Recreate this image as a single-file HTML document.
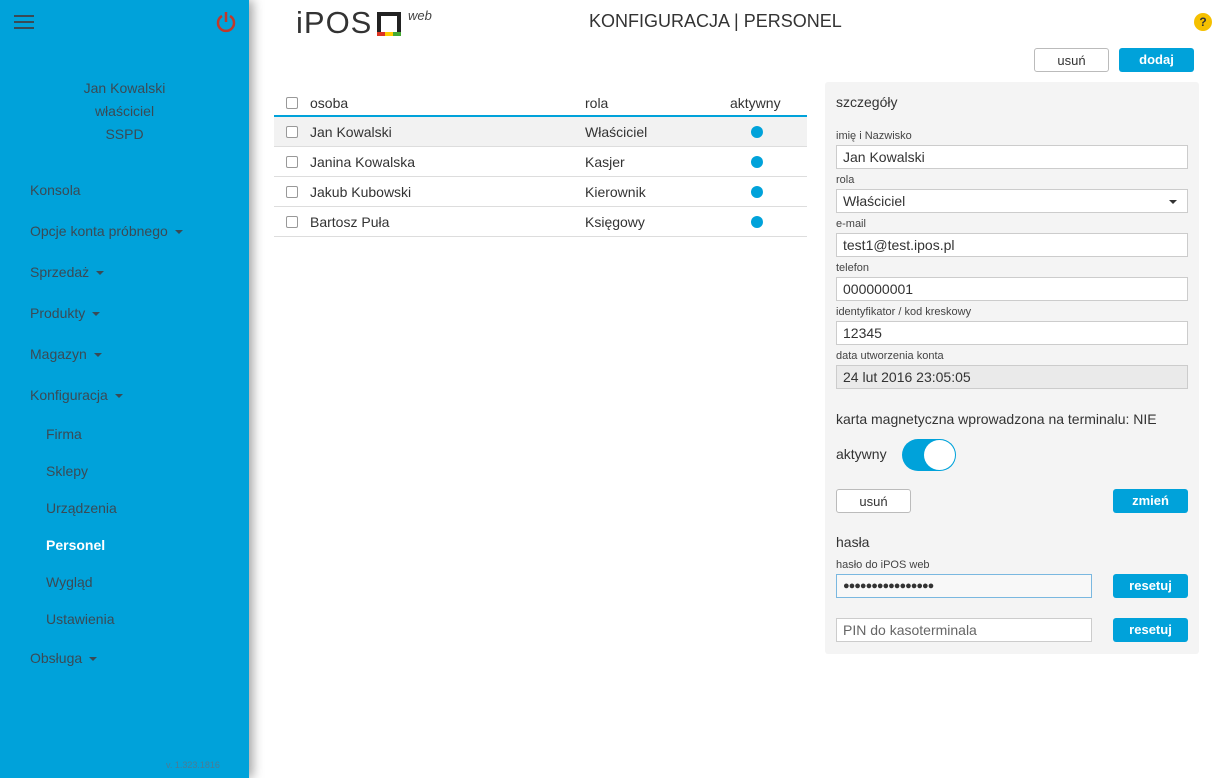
<!DOCTYPE html>
<html><head><meta charset="utf-8"><style>
*{box-sizing:border-box;margin:0;padding:0}
body{width:1223px;height:778px;position:relative;overflow:hidden;background:#fff;font-family:"Liberation Sans",sans-serif;color:#333;font-size:14px}
.a{position:absolute}
#sb{left:0;top:0;width:249px;height:778px;background:#00a2da;box-shadow:4px 0 10px rgba(0,0,0,.35);z-index:2}
.nav{position:absolute;left:30px;font-size:14px;color:#3a4a55}
.sub{left:46px}
.car{display:inline-block;border-left:4px solid transparent;border-right:4px solid transparent;border-top:4px solid #3a4a55;margin-left:7px;vertical-align:middle}
.row{position:absolute;left:274px;width:533px;height:30px;border-bottom:1px solid #ddd;font-size:14px}
.row span{position:absolute;top:7px}
.cb{position:absolute;left:12px;top:9px;width:12px;height:12px;border:1px solid #999;border-radius:2px;background:#fff}
.dot{position:absolute;left:477px;top:9px;width:12px;height:12px;border-radius:50%;background:#00a2da}
.lbl{position:absolute;left:836px;font-size:11px;color:#444}
.inp{position:absolute;left:836px;width:352px;height:24px;border:1px solid #ccc;background:#fff;font-size:14px;padding:3px 6px}
.btn{position:absolute;height:24px;border-radius:3px;font-size:13px;text-align:center;line-height:23px}
.bb{background:#00a2da;color:#fff;font-weight:bold}
.bw{background:#fff;border:1px solid #bbb;color:#333}
</style></head><body>
<div id="sb" class="a">
 <div class="a" style="left:14px;top:15px;width:20px;height:2px;background:#3a4a55;box-shadow:0 6px 0 #3a4a55,0 12px 0 #3a4a55"></div>
 <svg class="a" style="left:216px;top:11px" width="20" height="22" viewBox="0 0 20 22"><path d="M6 5 A8 8 0 1 0 14 5" fill="none" stroke="#c0392b" stroke-width="2.5"/><path d="M10 1 V11" stroke="#c0392b" stroke-width="2.5"/></svg>
 <div class="a" style="left:0;width:249px;top:77px;text-align:center;line-height:23px;font-size:14px;color:#3a4a55">Jan Kowalski<br>właściciel<br>SSPD</div>
 <div class="nav" style="top:182px">Konsola</div>
 <div class="nav" style="top:223px">Opcje konta próbnego<i class="car"></i></div>
 <div class="nav" style="top:264px">Sprzedaż<i class="car"></i></div>
 <div class="nav" style="top:305px">Produkty<i class="car"></i></div>
 <div class="nav" style="top:346px">Magazyn<i class="car"></i></div>
 <div class="nav" style="top:387px">Konfiguracja<i class="car"></i></div>
 <div class="nav sub" style="top:426px">Firma</div>
 <div class="nav sub" style="top:463px">Sklepy</div>
 <div class="nav sub" style="top:500px">Urządzenia</div>
 <div class="nav sub" style="top:537px;color:#fff;font-weight:bold">Personel</div>
 <div class="nav sub" style="top:574px">Wygląd</div>
 <div class="nav sub" style="top:611px">Ustawienia</div>
 <div class="nav" style="top:650px">Obsługa<i class="car"></i></div>
 <div class="a" style="left:166px;top:760px;font-size:9px;color:#4a7c94">v. 1.323.1816</div>
</div>
<div class="a" style="left:296px;top:5px;font-size:31px;color:#333;font-weight:300;letter-spacing:1px">iPOS</div>
<div class="a" style="left:377px;top:12px;width:24px;height:24px;border:4px solid #222;border-bottom:none"></div>
<div class="a" style="left:377px;top:32px;width:8px;height:4px;background:#d32"></div>
<div class="a" style="left:385px;top:32px;width:8px;height:4px;background:#fc0"></div>
<div class="a" style="left:393px;top:32px;width:8px;height:4px;background:#4a3"></div>
<div class="a" style="left:408px;top:8px;font-size:13px;font-style:italic;color:#444">web</div>
<div class="a" style="left:589px;top:11px;font-size:18px;color:#333">KONFIGURACJA | PERSONEL</div>
<div class="a" style="left:1194px;top:13px;width:18px;height:18px;border-radius:50%;background:#f5c000;text-align:center;font-size:12px;font-weight:bold;line-height:18px;color:#333">?</div>
<div class="btn bw" style="left:1034px;top:48px;width:75px">usuń</div>
<div class="btn bb" style="left:1119px;top:48px;width:75px">dodaj</div>
<div class="row" style="top:88px;height:29px;border-bottom:2px solid #00a2da"><i class="cb"></i><span style="left:36px">osoba</span><span style="left:311px">rola</span><span style="left:456px">aktywny</span></div>
<div class="row" style="top:117px;background:#f2f2f2"><i class="cb"></i><span style="left:36px">Jan Kowalski</span><span style="left:311px">Właściciel</span><i class="dot"></i></div>
<div class="row" style="top:147px"><i class="cb"></i><span style="left:36px">Janina Kowalska</span><span style="left:311px">Kasjer</span><i class="dot"></i></div>
<div class="row" style="top:177px"><i class="cb"></i><span style="left:36px">Jakub Kubowski</span><span style="left:311px">Kierownik</span><i class="dot"></i></div>
<div class="row" style="top:207px"><i class="cb"></i><span style="left:36px">Bartosz Puła</span><span style="left:311px">Księgowy</span><i class="dot"></i></div>
<div class="a" style="left:825px;top:82px;width:374px;height:572px;background:#f4f4f4;border-radius:3px"></div>
<div class="a" style="left:836px;top:94px;font-size:14px">szczegóły</div>
<div class="lbl" style="top:130px">imię i Nazwisko</div><div class="inp" style="top:145px">Jan Kowalski</div>
<div class="lbl" style="top:174px">rola</div><div class="inp" style="top:189px">Właściciel<i class="a" style="right:10px;top:10px;border-left:4px solid transparent;border-right:4px solid transparent;border-top:4px solid #333"></i></div>
<div class="lbl" style="top:218px">e-mail</div><div class="inp" style="top:233px">test1@test.ipos.pl</div>
<div class="lbl" style="top:262px">telefon</div><div class="inp" style="top:277px">000000001</div>
<div class="lbl" style="top:306px">identyfikator / kod kreskowy</div><div class="inp" style="top:321px">12345</div>
<div class="lbl" style="top:350px">data utworzenia konta</div><div class="inp" style="top:365px;background:#eaeaea">24 lut 2016 23:05:05</div>
<div class="a" style="left:836px;top:411px;font-size:14px">karta magnetyczna wprowadzona na terminalu: NIE</div>
<div class="a" style="left:836px;top:446px;font-size:14px">aktywny</div>
<div class="a" style="left:902px;top:439px;width:54px;height:32px;border-radius:16px;background:#00a2da"></div>
<div class="a" style="left:924px;top:440px;width:31px;height:30px;border-radius:50%;background:#fff"></div>
<div class="btn bw" style="left:836px;top:489px;width:75px">usuń</div>
<div class="btn bb" style="left:1113px;top:489px;width:75px">zmień</div>
<div class="a" style="left:836px;top:534px;font-size:14px">hasła</div>
<div class="lbl" style="top:559px">hasło do iPOS web</div>
<div class="inp" style="top:574px;width:256px;border-color:#7ab8e0;background:#f8f8f8;font-size:11px;letter-spacing:-1px;padding-top:5px">●●●●●●●●●●●●●●●●</div>
<div class="btn bb" style="left:1113px;top:574px;width:75px">resetuj</div>
<div class="inp" style="top:618px;width:256px;color:#666">PIN do kasoterminala</div>
<div class="btn bb" style="left:1113px;top:618px;width:75px">resetuj</div>
</body></html>
